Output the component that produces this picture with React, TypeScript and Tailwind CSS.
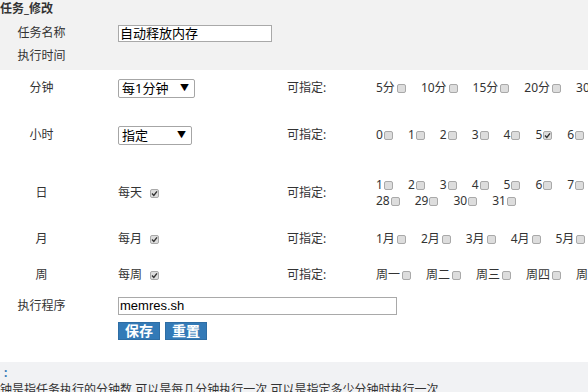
import React from "react";

const minutes = ["5分", "10分", "15分", "20分", "30分", "45分"];
const hours = Array.from({ length: 24 }, (_, i) => String(i));
const days1 = Array.from({ length: 27 }, (_, i) => String(i + 1));
const days2 = ["28", "29", "30", "31"];
const months = Array.from({ length: 12 }, (_, i) => `${i + 1}月`);
const weeks = ["周一", "周二", "周三", "周四", "周五", "周六", "周日"];

function Check({ on = false, className = "" }: { on?: boolean; className?: string }) {
  return (
    <span
      className={`inline-flex items-center justify-center w-[9px] h-[9px] shrink-0 rounded-[2px] border border-[#a9a9a9] bg-[#dddddd] ${className}`}
    >
      {on && (
        <svg width="7" height="7" viewBox="0 0 7 7">
          <path d="M1 3.6 L2.8 5.4 L6 1.4" fill="none" stroke="#333" strokeWidth="1.4" />
        </svg>
      )}
    </span>
  );
}

function Options({
  items,
  checked = [],
  wide = false,
}: {
  items: string[];
  checked?: string[];
  wide?: boolean;
}) {
  return (
    <div className="flex items-center whitespace-nowrap">
      {items.map((t) => (
        <span key={t} className="flex items-center shrink-0">
          <span>{t}</span>
          <Check
            on={checked.includes(t)}
            className={wide ? "ml-[2px] mr-[15px]" : "ml-[1px] mr-[15px]"}
          />
        </span>
      ))}
    </div>
  );
}

function Select({ value, width }: { value: string; width: string }) {
  return (
    <div
      className={`${width} h-[19px] flex items-center justify-between pl-[3px] pr-[5px] border border-[#a6a6a6] rounded-[2px] bg-white text-[13px] text-black`}
    >
      <span>{value}</span>
      <span className="text-[9px]">▼</span>
    </div>
  );
}

function Row({
  label,
  h,
  second,
  third,
}: {
  label: string;
  h: string;
  second?: React.ReactNode;
  third?: React.ReactNode;
}) {
  return (
    <div className={`flex items-center overflow-hidden ${h}`}>
      <div className="w-[83px] shrink-0 text-center whitespace-nowrap">{label}</div>
      <div className="w-[35px] shrink-0" />
      <div className="w-[169px] shrink-0 flex items-center whitespace-nowrap">{second}</div>
      {third !== undefined && (
        <>
          <div className="w-[89px] shrink-0 whitespace-nowrap">可指定:</div>
          <div className="shrink-0">{third}</div>
        </>
      )}
    </div>
  );
}

export default function App() {
  return (
    <div
      className="w-[588px] h-[392px] overflow-hidden bg-white text-[12px] leading-[16px] text-[#333]"
      style={{ fontFamily: '"Noto Sans", "Noto Sans CJK SC", sans-serif' }}
    >
      <div className="bg-[#f2f2f2] h-[70px]">
        <div className="h-[18px] flex items-center font-bold">任务_修改</div>
        <Row
          label="任务名称"
          h="h-[30px]"
          second={
            <div className="w-[154px] h-[17px] flex items-center border border-[#a9a9a9] bg-white text-[13px] text-black px-[1px]">
              自动释放内存
            </div>
          }
        />
        <Row label="执行时间" h="h-[16px]" />
      </div>

      <Row
        label="分钟"
        h="h-[36px]"
        second={<Select value="每1分钟" width="w-[77px]" />}
        third={<Options items={minutes} wide />}
      />
      <Row
        label="小时"
        h="h-[58px]"
        second={<Select value="指定" width="w-[74px]" />}
        third={<Options items={hours} checked={["5"]} />}
      />
      <Row
        label="日"
        h="h-[58px]"
        second={
          <span className="flex items-center">
            每天
            <Check on className="ml-[8px]" />
          </span>
        }
        third={
          <div>
            <Options items={days1} />
            <Options items={days2} />
          </div>
        }
      />
      <Row
        label="月"
        h="h-[34px]"
        second={
          <span className="flex items-center">
            每月
            <Check on className="ml-[8px]" />
          </span>
        }
        third={<Options items={months} wide />}
      />
      <Row
        label="周"
        h="h-[38px]"
        second={
          <span className="flex items-center">
            每周
            <Check on className="ml-[8px]" />
          </span>
        }
        third={<Options items={weeks} wide />}
      />
      <div className="flex items-center h-[24px]">
        <div className="w-[83px] shrink-0 text-center">执行程序</div>
        <div className="w-[35px] shrink-0" />
        <div
          className="w-[279px] h-[18px] flex items-center border border-[#a9a9a9] bg-white text-[13px] text-black px-[1px]"
          style={{ fontFamily: '"Liberation Sans", Arial, sans-serif' }}
        >
          memres.sh
        </div>
      </div>
      <div className="flex gap-[5px] pl-[118px] pt-[4px] h-[44px]">
        <button className="w-[42px] h-[18px] bg-[#337ab7] border border-[#2e6da4] text-white font-bold text-[14px] leading-[16px]">
          保存
        </button>
        <button className="w-[42px] h-[18px] bg-[#337ab7] border border-[#2e6da4] text-white font-bold text-[14px] leading-[16px]">
          重置
        </button>
      </div>

      <div className="bg-[#f1f2f4] h-[30px] pt-[4px]">
        <div className="pl-[4px] h-[14px] leading-[14px] text-[#337ab7] font-bold">:</div>
        <div className="whitespace-nowrap pt-[2px]">
          钟是指任务执行的分钟数,可以是每几分钟执行一次,可以是指定多少分钟时执行一次
        </div>
      </div>
    </div>
  );
}
